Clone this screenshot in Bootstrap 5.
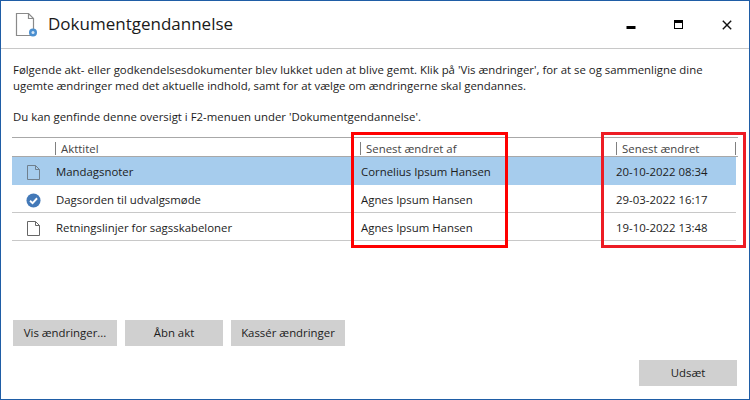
<!DOCTYPE html>
<html lang="da">
<head>
    <meta charset="UTF-8">
    <title>Dokumentgendannelse</title>
    <link href="https://cdn.jsdelivr.net/npm/bootstrap@5.3.3/dist/css/bootstrap.min.css" rel="stylesheet">
    <script src="https://cdn.jsdelivr.net/npm/bootstrap@5.3.3/dist/js/bootstrap.bundle.min.js"></script>
    <style>
        html, body { height: 100%; margin: 0; overflow: hidden; background: #fff; }
        body { font-family: "Open Sans", "Noto Sans", sans-serif; font-size: 11.4px; color: #1c1c1c; }
        .dlg-window { width: 750px; height: 400px; border: 1px solid #1f5da6; }
        .dlg-title { height: 48px; flex: none; border-bottom: 1px solid #c8c8c8; padding-left: 14px; }
        .dlg-title h1 { font-size: 17px; font-weight: 400; margin: 0 0 0 10px; color: #1a1a1a; }
        .win-controls { gap: 38px; margin-right: 17px; }
        .win-controls svg { display: block; }
        .dlg-main { padding: 13px 12px 12px 11px; position: relative; }
        .intro { line-height: 16px; margin: 0 0 15px 1px; }
        .intro-last { margin-bottom: 12px; }
        .doc-grid { width: 726px; table-layout: fixed; border-collapse: collapse; }
        .doc-grid th { font-weight: 400; color: #444; height: 19px; padding: 2px 0 0; border-top: 1px solid #a8a8a8; border-bottom: 1px solid #a8a8a8; }
        .doc-grid td { height: 28px; padding: 2px 0 0; border-bottom: 1px solid #c8c8c8; }
        .doc-grid td.cell-text { padding-left: 1px; }
        .doc-grid tr.picked td { background: #a6cced; border-bottom-color: #a6cced; }
        .doc-grid tr td:last-child, .doc-grid tr.picked td:last-child { background: none; border-bottom: 0; }
        .head-cell { border-left: 1px solid #808080; padding-left: 5px; height: 13px; line-height: 13px; display: block; }
        .head-end { border-right: 1px solid #808080; }
        .dlg-btn { background: #d0d0d0; border: 0; border-radius: 0; font-size: 11.4px; height: 26px; padding: 0; color: #1c1c1c; }
        .btn-vis { width: 104px; }
        .btn-aabn { width: 98px; }
        .btn-kasser { width: 114px; }
        .btn-udsaet { width: 98px; }
        .action-row { margin: 79px 0 0 1px; gap: 8px; }
        .later-row { margin-top: 14px; }
        .mark-box { position: absolute; border: 3px solid #ff0000; top: 83px; height: 116px; }
        .mark-a { left: 350px; width: 157px; }
        .mark-b { left: 600px; width: 145px; border-color: #ed1c24; }
    </style>
</head>
<body>
    <div class="dlg-window d-flex flex-column">
        <div class="dlg-title d-flex align-items-center">
            <svg width="23" height="26" viewBox="0 0 23 26">
                <path d="M1.5 1.5H13.5L18.5 6.5V23.5H1.5Z" fill="#fff" stroke="#8a8a8a" stroke-width="1.2"/>
                <path d="M13.5 1.5V6.5H18.5" fill="none" stroke="#8a8a8a" stroke-width="1.2"/>
                <circle cx="18" cy="20.5" r="4" fill="#4a8fd0"/>
                <circle cx="18" cy="20.5" r="1.5" fill="#d5e6f6"/>
            </svg>
            <h1>Dokumentgendannelse</h1>
            <div class="win-controls d-flex ms-auto align-items-center">
                <svg width="10" height="10" viewBox="0 0 10 10"><rect x="0.5" y="6" width="9" height="3" fill="#000"/></svg>
                <svg width="10" height="10" viewBox="0 0 10 10"><rect x="0.5" y="0.5" width="8" height="8" fill="none" stroke="#000"/><rect x="0" y="0" width="9" height="3" fill="#000"/></svg>
                <svg width="10" height="10" viewBox="0 0 10 10"><path d="M0.8 0.8L9.2 9.2M9.2 0.8L0.8 9.2" stroke="#111" stroke-width="1.4"/></svg>
            </div>
        </div>
        <div class="dlg-main flex-grow-1">
            <p class="intro">Følgende akt- eller godkendelsesdokumenter blev lukket uden at blive gemt. Klik på 'Vis ændringer', for at se og sammenligne dine<br>ugemte ændringer med det aktuelle indhold, samt for at vælge om ændringerne skal gendannes.</p>
            <p class="intro intro-last">Du kan genfinde denne oversigt i F2-menuen under 'Dokumentgendannelse'.</p>
            <table class="doc-grid">
                <colgroup>
                    <col style="width: 43px">
                    <col style="width: 305px">
                    <col style="width: 256px">
                    <col style="width: 120px">
                    <col style="width: 2px">
                </colgroup>
                <thead>
                    <tr>
                        <th></th>
                        <th><span class="head-cell">Akttitel</span></th>
                        <th><span class="head-cell">Senest ændret af</span></th>
                        <th><span class="head-cell head-end">Senest ændret</span></th>
                        <th></th>
                    </tr>
                </thead>
                <tbody>
                    <tr class="picked">
                        <td class="text-center">
                            <svg width="13" height="15" viewBox="0 0 13 15"><path d="M.5.5H8.5L12.5 4.5V14.5H.5Z" fill="#a6cced" stroke="#6f7f8d"/><path d="M8.5.5V4.5H12.5" fill="none" stroke="#6f7f8d"/></svg>
                        </td>
                        <td class="cell-text">Mandagsnoter</td>
                        <td class="cell-text">Cornelius Ipsum Hansen</td>
                        <td>20-10-2022 08:34</td>
                        <td></td>
                    </tr>
                    <tr>
                        <td class="text-center">
                            <svg width="15" height="15" viewBox="0 0 16 16"><circle cx="8" cy="8" r="7.5" fill="#4379b8"/><path d="M4.3 8.3L7 10.8L11.8 5.6" fill="none" stroke="#fff" stroke-width="2"/></svg>
                        </td>
                        <td class="cell-text">Dagsorden til udvalgsmøde</td>
                        <td class="cell-text">Agnes Ipsum Hansen</td>
                        <td>29-03-2022 16:17</td>
                        <td></td>
                    </tr>
                    <tr>
                        <td class="text-center">
                            <svg width="13" height="15" viewBox="0 0 13 15"><path d="M.5.5H8.5L12.5 4.5V14.5H.5Z" fill="#fff" stroke="#666"/><path d="M8.5.5V4.5H12.5" fill="none" stroke="#666"/></svg>
                        </td>
                        <td class="cell-text">Retningslinjer for sagsskabeloner</td>
                        <td class="cell-text">Agnes Ipsum Hansen</td>
                        <td>19-10-2022 13:48</td>
                        <td></td>
                    </tr>
                </tbody>
            </table>
            <div class="action-row d-flex">
                <button class="btn dlg-btn btn-vis">Vis ændringer...</button>
                <button class="btn dlg-btn btn-aabn">Åbn akt</button>
                <button class="btn dlg-btn btn-kasser">Kassér ændringer</button>
            </div>
            <div class="later-row d-flex justify-content-end">
                <button class="btn dlg-btn btn-udsaet">Udsæt</button>
            </div>
            <div class="mark-box mark-a"></div>
            <div class="mark-box mark-b"></div>
        </div>
    </div>
</body>
</html>
